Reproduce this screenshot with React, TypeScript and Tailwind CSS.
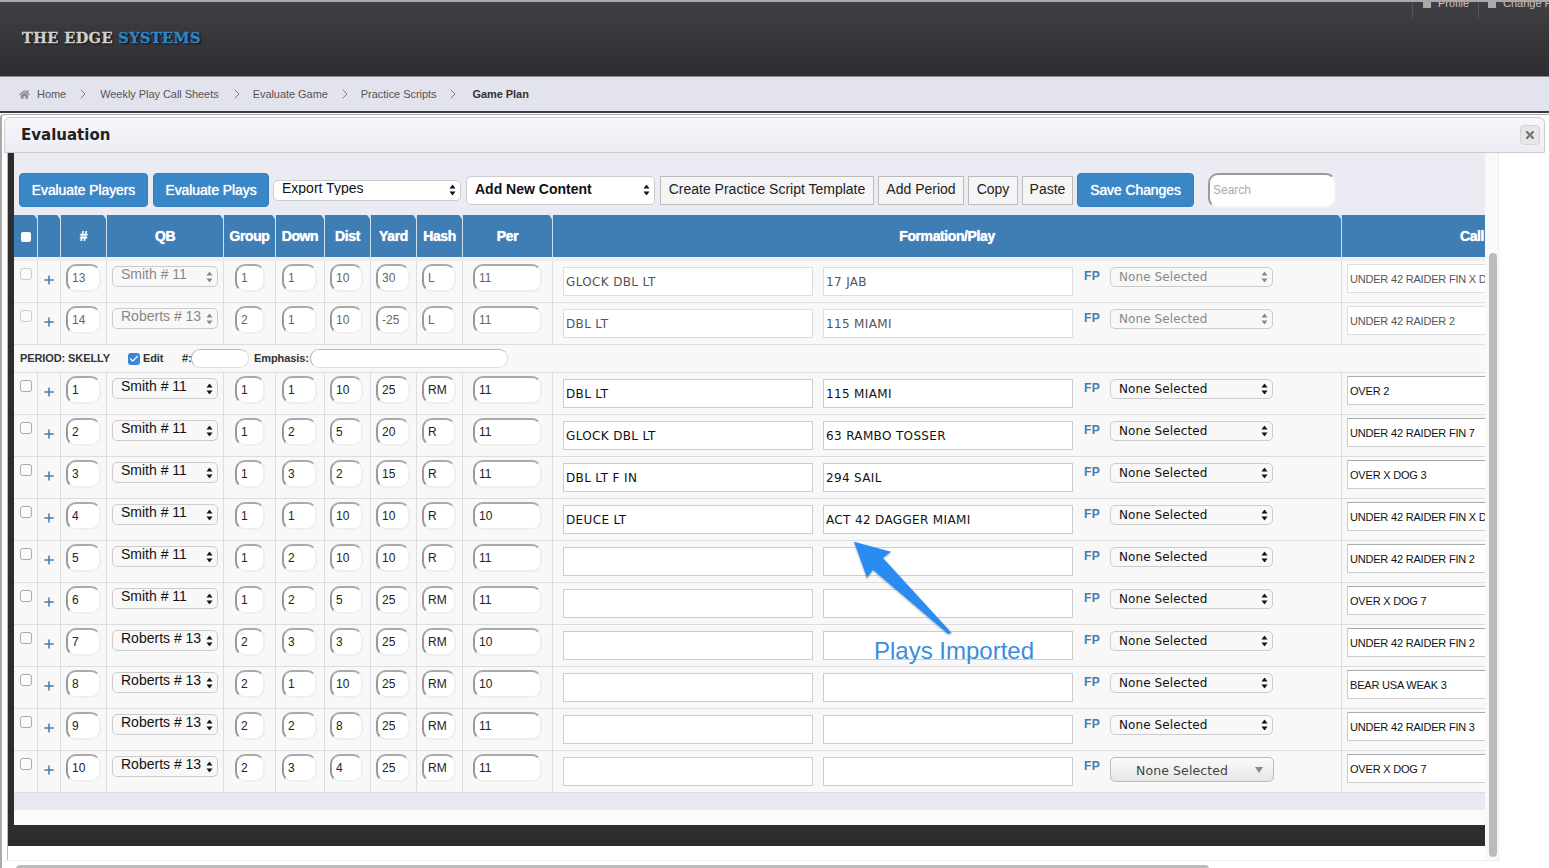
import React from "react";
import { ChevronRight, Plus, Check } from "lucide-react";
import { FaHome, FaTimes } from "react-icons/fa";

type Row = {
  n: string; qb: string; group: string; down: string; dist: string; yard: string; hash: string; per: string;
  form: string; play: string; call: string; off?: boolean; last?: boolean;
};

const S = "Smith # 11";
const R = "Roberts # 13";
const rowsTop: Row[] = [
  { n: "13", qb: S, group: "1", down: "1", dist: "10", yard: "30", hash: "L", per: "11", form: "GLOCK DBL LT", play: "17 JAB", call: "UNDER 42 RAIDER FIN X DOG", off: true },
  { n: "14", qb: R, group: "2", down: "1", dist: "10", yard: "-25", hash: "L", per: "11", form: "DBL LT", play: "115 MIAMI", call: "UNDER 42 RAIDER 2", off: true },
];
const rowsBottom: Row[] = [
  { n: "1", qb: S, group: "1", down: "1", dist: "10", yard: "25", hash: "RM", per: "11", form: "DBL LT", play: "115 MIAMI", call: "OVER 2" },
  { n: "2", qb: S, group: "1", down: "2", dist: "5", yard: "20", hash: "R", per: "11", form: "GLOCK DBL LT", play: "63 RAMBO TOSSER", call: "UNDER 42 RAIDER FIN 7" },
  { n: "3", qb: S, group: "1", down: "3", dist: "2", yard: "15", hash: "R", per: "11", form: "DBL LT F IN", play: "294 SAIL", call: "OVER X DOG 3" },
  { n: "4", qb: S, group: "1", down: "1", dist: "10", yard: "10", hash: "R", per: "10", form: "DEUCE LT", play: "ACT 42 DAGGER MIAMI", call: "UNDER 42 RAIDER FIN X DOG" },
  { n: "5", qb: S, group: "1", down: "2", dist: "10", yard: "10", hash: "R", per: "11", form: "", play: "", call: "UNDER 42 RAIDER FIN 2" },
  { n: "6", qb: S, group: "1", down: "2", dist: "5", yard: "25", hash: "RM", per: "11", form: "", play: "", call: "OVER X DOG 7" },
  { n: "7", qb: R, group: "2", down: "3", dist: "3", yard: "25", hash: "RM", per: "10", form: "", play: "", call: "UNDER 42 RAIDER FIN 2" },
  { n: "8", qb: R, group: "2", down: "1", dist: "10", yard: "25", hash: "RM", per: "10", form: "", play: "", call: "BEAR USA WEAK 3" },
  { n: "9", qb: R, group: "2", down: "2", dist: "8", yard: "25", hash: "RM", per: "11", form: "", play: "", call: "UNDER 42 RAIDER FIN 3" },
  { n: "10", qb: R, group: "2", down: "3", dist: "4", yard: "25", hash: "RM", per: "11", form: "", play: "", call: "OVER X DOG 7", last: true },
];

const Arrows = ({ off }: { off?: boolean }) => (
  <svg viewBox="0 0 7 11" className="absolute right-[5px] top-1/2 -translate-y-1/2 w-[7px] h-[11px] pointer-events-none">
    <path d="M3.5 0 L6.5 4 L0.5 4 Z M3.5 11 L6.5 7 L0.5 7 Z" fill={off ? "#888888" : "#111111"} />
  </svg>
);

function Sel({ value, className, off, wrap }: { value: string; className: string; off?: boolean; wrap: string }) {
  return (
    <div className={`relative shrink-0 ${wrap}`}>
      <select
        defaultValue={value}
        disabled={off}
        className={`block w-full h-full appearance-none rounded-[5px] border border-[#cccccc] bg-[#f8f8f8] opacity-100 ${off ? "text-[#888888]" : "text-[#111111]"} ${className}`}
      >
        <option>{value}</option>
      </select>
      <Arrows off={off} />
    </div>
  );
}

function Round({ value, wrap, off }: { value: string; wrap: string; off?: boolean }) {
  return (
    <input
      defaultValue={value}
      className={`block h-[28px] rounded-[10px] border-2 border-t-[#aaaaaa] border-l-[#999999] border-r-[#efefef] border-b-[#efefef] bg-white pl-[4px] text-[12px] outline-none ${off ? "text-[#666666]" : "text-[#222222]"} ${wrap}`}
    />
  );
}

function TableRow({ r }: { r: Row }) {
  const td = "p-0 h-[42px] align-top bg-[#f8f8f8] border-r border-b border-[#dddddd]";
  const boxBorder = r.off ? "border-[#dddddd] text-[#555555]" : "border-[#cccccc] text-[#111111]";
  return (
    <tr>
      <td className={td}>
        <div className="pl-[6px] pt-[7px]">
          <input type="checkbox" className={`block appearance-none w-[12px] h-[12px] rounded-[3px] border bg-[#fbfbfb] ${r.off ? "border-[#cccccc]" : "border-[#aaaaaa]"}`} />
        </div>
      </td>
      <td className={td}>
        <div className="pl-[4px] pt-[12px]">
          <Plus size={14} strokeWidth={2.6} className="text-[#3f7db5]" />
        </div>
      </td>
      <td className={td}><div className="pl-[5px] pt-[3px]"><Round value={r.n} wrap="w-[35px]" off={r.off} /></div></td>
      <td className={td}>
        <div className="pl-[5px] pt-[5px]">
          <Sel value={r.qb} off={r.off} wrap="w-[106px] h-[21px]" className="pl-[8px] pb-[5px] text-[14px] leading-[14px]" />
        </div>
      </td>
      <td className={td}><div className="pl-[11px] pt-[3px]"><Round value={r.group} wrap="w-[30px]" off={r.off} /></div></td>
      <td className={td}><div className="pl-[6px] pt-[3px]"><Round value={r.down} wrap="w-[35px]" off={r.off} /></div></td>
      <td className={td}><div className="pl-[5px] pt-[3px]"><Round value={r.dist} wrap="w-[33px]" off={r.off} /></div></td>
      <td className={td}><div className="pl-[5px] pt-[3px]"><Round value={r.yard} wrap="w-[34px]" off={r.off} /></div></td>
      <td className={td}><div className="pl-[5px] pt-[3px]"><Round value={r.hash} wrap="w-[34px]" off={r.off} /></div></td>
      <td className={td}><div className="pl-[10px] pt-[3px]"><Round value={r.per} wrap="w-[69px]" off={r.off} /></div></td>
      <td className={td}>
        <div className="flex items-start pl-[10px] pt-[6px]">
          <input defaultValue={r.form} className={`block w-[250px] h-[29px] shrink-0 border bg-white pl-[2px] font-['DejaVu_Sans',sans-serif] text-[12px] tracking-[0.35px] outline-none ${boxBorder}`} />
          <input defaultValue={r.play} className={`block w-[250px] h-[29px] shrink-0 ml-[10px] border bg-white pl-[2px] font-['DejaVu_Sans',sans-serif] text-[12px] tracking-[0.35px] outline-none ${boxBorder}`} />
          <span className="w-[26px] ml-[11px] shrink-0 text-[12px] leading-[16px] pt-[1px] font-bold tracking-[0.5px] text-[#3f7db5]">FP</span>
          {r.last ? (
            <div className="relative w-[164px] h-[25px] shrink-0 rounded-[5px] border border-[#bbbbbb] bg-gradient-to-b from-[#fbfbfb] to-[#e6e6e6] pl-[25px] font-['DejaVu_Sans',sans-serif] text-[12.5px] tracking-[0.1px] leading-[26px] text-[#444444]">
              None Selected
              <svg viewBox="0 0 8 6" className="absolute right-[10px] top-[9px] w-[8px] h-[6px]"><path d="M0 0H8L4 6Z" fill="#888888" /></svg>
            </div>
          ) : (
            <Sel value="None Selected" off={r.off} wrap="w-[163px] h-[20px]" className="pl-[8px] font-['DejaVu_Sans',sans-serif] text-[12px] tracking-[0.1px] leading-[16px]" />
          )}
        </div>
      </td>
      <td className="p-0 h-[42px] align-top bg-[#f8f8f8] border-b border-[#dddddd]">
        <div className="pl-[5px] pt-[3px]">
          <input defaultValue={r.call} className={`block w-[240px] h-[29px] border bg-white pl-[2px] text-[11px] tracking-[-0.2px] outline-none ${r.off ? "border-[#dddddd] text-[#555555]" : "border-[#cccccc] border-t-[#aaaaaa] text-[#111111]"}`} />
        </div>
      </td>
    </tr>
  );
}

const headers = ["", "", "#", "QB", "Group", "Down", "Dist", "Yard", "Hash", "Per", "Formation/Play", "Call"];

const widths = ["w-[24px]", "w-[23px]", "w-[46px]", "w-[117px]", "w-[52px]", "w-[49px]", "w-[46px]", "w-[46px]", "w-[46px]", "w-[90px]", "w-[789px]", "w-[260px]"];

const blueBtn = "h-[34px] shrink-0 rounded-[4px] border border-[#357ebd] bg-[#3a87c8] text-[14px] text-white tracking-[-0.1px] [text-shadow:0_0_1px_#ffffff]";
const grayBtn = "h-[29px] shrink-0 border border-[#bbbbbb] bg-[#f5f5f5] text-[14px] text-[#222222]";
const crumbSep = "shrink-0 text-[#666666]";

export default function App() {
  return (
    <div className="relative w-[1549px] h-[868px] overflow-hidden bg-white font-['Liberation_Sans',Arial,sans-serif]">
      {/* top bar */}
      <header className="flex justify-between h-[77px] overflow-hidden border-t-2 border-[#a9a9a9] border-b border-b-[#8a8a8a] bg-gradient-to-b from-[#403f44] to-[#2e2d31]">
        <div className="pl-[22px] pt-[26px] font-['DejaVu_Serif',serif] font-bold text-[14.5px] leading-[20px] tracking-[0.4px] text-[#cfcfcf] [-webkit-text-stroke:0.3px] [text-shadow:1px_1px_2px_#000000]">
          THE EDGE <span className="text-[#2f86c5]">SYSTEMS</span>
        </div>
        <div className="flex items-start h-[16px] text-[11px] text-[#c4c4c4]">
          <div className="flex items-center gap-[7px] w-[66px] h-[16px] border-l border-[#55545a] pl-[10px]">
            <span className="shrink-0 w-[8px] h-[8px] -mt-[12px] bg-[#aaaaaa]" />
            <span className="-mt-[13px]">Profile</span>
          </div>
          <div className="flex items-center gap-[7px] w-[71px] h-[16px] border-l border-[#55545a] pl-[9px] whitespace-nowrap">
            <span className="shrink-0 w-[8px] h-[8px] -mt-[12px] bg-[#aaaaaa]" />
            <span className="-mt-[13px]">Change Password</span>
          </div>
        </div>
      </header>

      {/* breadcrumb */}
      <nav className="flex items-center h-[36px] pl-[19px] bg-[#e3e3ee] border-b-2 border-[#3a3a3d] text-[11px] tracking-[-0.05px] text-[#555555]">
        <FaHome size={11} className="text-[#8b8b8b]" />
        <span className="ml-[7px]">Home</span>
        <ChevronRight size={16} strokeWidth={1.2} className={`ml-[9px] ${crumbSep}`} />
        <span className="ml-[9px]">Weekly Play Call Sheets</span>
        <ChevronRight size={16} strokeWidth={1.2} className={`ml-[10px] ${crumbSep}`} />
        <span className="ml-[8px]">Evaluate Game</span>
        <ChevronRight size={16} strokeWidth={1.2} className={`ml-[9px] ${crumbSep}`} />
        <span className="ml-[8px]">Practice Scripts</span>
        <ChevronRight size={16} strokeWidth={1.2} className={`ml-[9px] ${crumbSep}`} />
        <span className="ml-[11px] font-bold text-[#333333]">Game Plan</span>
      </nav>

      {/* modal */}
      <main className="mt-[1px] pt-[2px] pl-[2px] border-l-2 border-t border-[#aaaaaa] rounded-tl-[4px]">
        <div className="flex items-center justify-between w-[1541px] h-[36px] pl-[16px] pr-[4px] rounded-t-[6px] border border-[#cccccc] bg-gradient-to-b from-[#f6f6fb] to-[#ececf4]">
          <h1 className="pt-[1px] font-['DejaVu_Sans',sans-serif] font-bold text-[15px] text-[#222222]">Evaluation</h1>
          <button className="flex items-center justify-center w-[20px] h-[20px] rounded-[4px] border border-[#d5d5d5] bg-[#e6e6e6]">
            <FaTimes size={12} className="text-[#777777]" />
          </button>
        </div>

        <div className="flex h-[707px] ml-[3px] border-l border-[#bbbbbb]">
          <div className="w-[1477px] h-[693px] bg-[#2d2d30] pl-[6px] pb-[21px]">
            <div className="h-full bg-[#fbfbfb]">
              {/* toolbar */}
              <div className="flex items-center h-[62px] pt-[12px] pl-[5px] gap-[4px] bg-[#ebebf4]">
                <button className={`${blueBtn} w-[129px]`}>Evaluate Players</button>
                <button className={`${blueBtn} w-[116px] ml-[1px]`}>Evaluate Plays</button>
                <Sel value="Export Types" wrap="w-[188px] h-[21px]" className="pl-[8px] pb-[5px] text-[14px] leading-[14px] !bg-white" />
                <Sel value="Add New Content" wrap="w-[189px] h-[29px] ml-[1px]" className="pl-[8px] pb-[2px] text-[14px] font-bold !bg-white" />
                <button className={`${grayBtn} w-[214px] ml-[1px] pb-[1px]`}>Create Practice Script Template</button>
                <button className={`${grayBtn} w-[86px] pb-[1px]`}>Add Period</button>
                <button className={`${grayBtn} w-[50px] pb-[1px]`}>Copy</button>
                <button className={`${grayBtn} w-[51px] pb-[1px]`}>Paste</button>
                <button className={`${blueBtn} w-[117px]`}>Save Changes</button>
                <input
                  placeholder="Search"
                  className="w-[128px] h-[35px] ml-[10px] rounded-[10px] border-2 border-t-[#999999] border-l-[#999999] border-r-[#f4f4f4] border-b-[#f4f4f4] bg-white pl-[3px] text-[12px] outline-none placeholder:text-[#aaaaaa]"
                />
              </div>

              {/* table */}
              <div className="w-[1471px] overflow-hidden">
                <table className="table-fixed w-[1588px] border-separate border-spacing-0">
                  <colgroup>
                    {widths.map((w, i) => <col key={i} className={w} />)}
                  </colgroup>
                  <thead>
                    <tr>
                      {headers.map((h, i) => (
                        <th key={i} className={`relative p-0 h-[46px] pt-[1px] bg-[#3f7db5] text-center text-[14px] font-bold tracking-[-0.4px] text-white [text-shadow:0_0_1px_#ffffff] border-b-4 border-b-[#eeeeee] ${i < 11 ? "border-r border-r-[#cfe0ee]" : ""}`}>
                          {i === 0 ? (
                            <input type="checkbox" className="block mx-auto appearance-none w-[10px] h-[10px] rounded-[2px] bg-white" />
                          ) : h}
                          {i < 11 && (
                            <svg viewBox="0 0 7 5" className="absolute -right-[4px] top-0 w-[7px] h-[5px]"><path d="M0 0H7L3.5 5Z" fill="#cfe0ee" /></svg>
                          )}
                        </th>
                      ))}
                    </tr>
                  </thead>
                  <tbody>
                    {rowsTop.map((r) => <TableRow key={r.n} r={r} />)}
                    <tr>
                      <td colSpan={12} className="p-0 h-[28px] bg-[#f8f8f8] border-b border-[#dddddd]">
                        <div className="flex items-center pl-[6px] text-[11px] font-bold tracking-[-0.1px] text-[#333333]">
                          <span className="w-[108px]">PERIOD: SKELLY</span>
                          <span className="relative flex items-center justify-center w-[12px] h-[12px] rounded-[3px] bg-[#3a87d8]">
                            <input type="checkbox" defaultChecked className="absolute inset-0 appearance-none" />
                            <Check size={10} strokeWidth={3} className="text-white pointer-events-none" />
                          </span>
                          <span className="ml-[3px] w-[39px]">Edit</span>
                          <span className="w-[9px]">#:</span>
                          <input className="w-[58px] h-[19px] rounded-[9px] border border-[#dddddd] border-l-[#aaaaaa] border-t-[#bbbbbb] bg-white outline-none" />
                          <span className="ml-[5px] w-[56px]">Emphasis:</span>
                          <input className="w-[198px] h-[19px] rounded-[9px] border border-[#dddddd] border-l-[#aaaaaa] border-t-[#bbbbbb] bg-white outline-none" />
                        </div>
                      </td>
                    </tr>
                    {rowsBottom.map((r) => <TableRow key={r.n} r={r} />)}
                  </tbody>
                </table>
              </div>

              <div className="h-[17px] bg-[#e9e9f3]" />
            </div>
          </div>

          {/* vertical scrollbar */}
          <div className="w-[14px] pt-[100px] pl-[4px] bg-[#f9f9f9] border-r border-[#eeeeee]">
            <div className="w-[8px] h-[604px] rounded-[4px] bg-[#bbbbbb]" />
          </div>
        </div>

        {/* horizontal scrollbar */}
        <div className="w-[1495px] pt-[4px] pl-[12px] border-t border-[#eeeeee]">
          <div className="w-[1193px] h-[8px] rounded-[4px] bg-[#bbbbbb]" />
        </div>
      </main>

      {/* annotation */}
      <svg className="absolute left-[840px] top-[530px] w-[130px] h-[115px] overflow-visible" viewBox="840 530 130 115">
        <defs>
          <filter id="arrowShadow" x="-20%" y="-20%" width="140%" height="140%">
            <feDropShadow dx="0" dy="1" stdDeviation="1" floodColor="#000000" floodOpacity="0.3" />
          </filter>
        </defs>
        <path d="M854 541.7 L891 551.7 L883 558 L951.7 633 L948 634 L873 570 L867 578 Z" fill="#2a8cf0" filter="url(#arrowShadow)" />
      </svg>
      <span className="absolute left-[874px] top-[636px] text-[24px] leading-[30px] text-[#3b8ddb]">Plays Imported</span>
    </div>
  );
}
